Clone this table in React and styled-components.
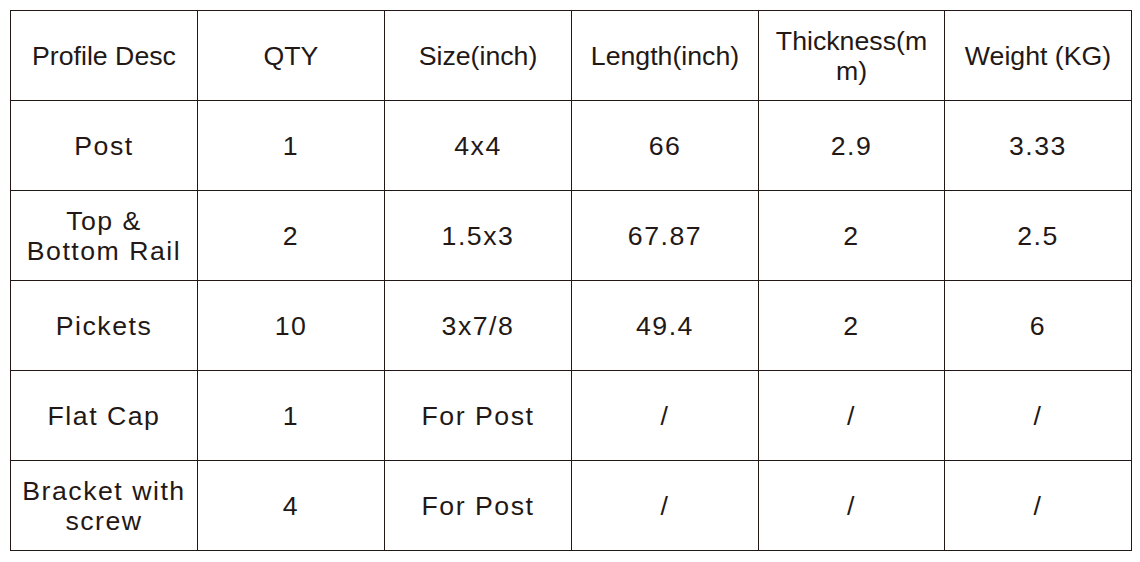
import React from 'react';
import styled, { createGlobalStyle } from 'styled-components';

const GlobalStyle = createGlobalStyle`
  body {
    margin: 0;
    background: #fff;
    font-family: "Liberation Sans", Arial, sans-serif;
  }
`;

const Page = styled.div`
  padding: 10px 0 0 10px;
`;

const SpecTable = styled.table`
  border-collapse: collapse;
  table-layout: fixed;
  width: 1121px;
  color: #231815;
`;

const Cell = styled.td`
  height: 90px;
  padding: 0 10px;
  box-sizing: border-box;
  border: 1px solid #231815;
  text-align: center;
  vertical-align: middle;
  font-size: 26.7px;
  font-weight: normal;
  line-height: 30px;
  letter-spacing: ${props => (props.$head ? '0' : '1.5px')};
  word-break: ${props => (props.$head ? 'break-all' : 'normal')};
`;

const headers = ['Profile Desc', 'QTY', 'Size(inch)', 'Length(inch)', 'Thickness(mm)', 'Weight (KG)'];

const rows = [
  ['Post', '1', '4x4', '66', '2.9', '3.33'],
  ['Top & Bottom Rail', '2', '1.5x3', '67.87', '2', '2.5'],
  ['Pickets', '10', '3x7/8', '49.4', '2', '6'],
  ['Flat Cap', '1', 'For Post', '/', '/', '/'],
  ['Bracket with screw', '4', 'For Post', '/', '/', '/'],
];

const colWidths = [187, 187, 187, 187, 186, 187];

export default function App() {
  return (
    <Page>
      <GlobalStyle />
      <SpecTable>
        <colgroup>
          {colWidths.map((w, i) => (
            <col key={i} style={{ width: w }} />
          ))}
        </colgroup>
        <tbody>
          <tr>
            {headers.map(h => (
              <Cell as="th" key={h} $head>{h}</Cell>
            ))}
          </tr>
          {rows.map(r => (
            <tr key={r[0]}>
              {r.map((v, i) => (
                <Cell key={i}>{v}</Cell>
              ))}
            </tr>
          ))}
        </tbody>
      </SpecTable>
    </Page>
  );
}
